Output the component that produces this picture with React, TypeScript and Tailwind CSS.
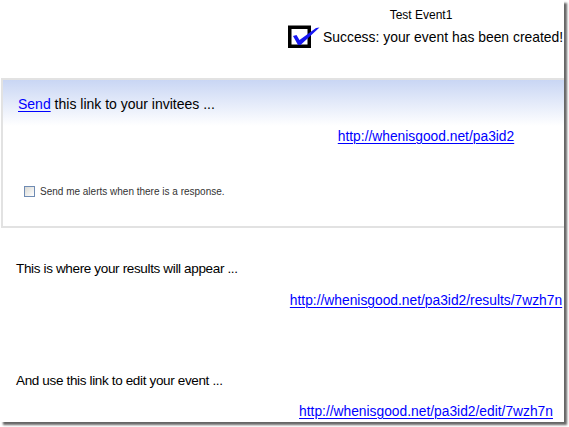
import React from 'react';

function SuccessIcon() {
    return (
        <svg width="32" height="24" viewBox="0 0 32 24" className="shrink-0">
            <rect x="1.75" y="2.25" width="19.5" height="19" fill="#fff" stroke="#000" strokeWidth="3.5" />
            <polygon points="5,11 8.5,10 11.5,15 28,3 31.5,2.5 12.5,20 10,20" fill="#1616f2" />
        </svg>
    );
}

function Link({ children }: { children: React.ReactNode }) {
    return (
        <a href="#" className="text-[#0000ff] underline underline-offset-2 decoration-1">
            {children}
        </a>
    );
}

export default function App() {
    return (
        <div className="w-[569px] h-[427px] bg-white font-['Liberation_Sans',Arial,sans-serif] text-black">
            <div className="w-[564px] h-[422px] bg-white overflow-hidden shadow-[3px_3px_2px_rgba(0,0,0,0.6)]">
                <header className="flex justify-end pt-[7px]">
                    <div className="w-[276px] flex flex-col items-center">
                        <div className="pr-[10px] text-[12px] leading-4">Test Event1</div>
                        <div className="mt-[2px] h-6 w-full flex items-center">
                            <SuccessIcon />
                            <span className="ml-[3px] text-[13.9px] leading-4 whitespace-nowrap">Success: your event has been created!</span>
                        </div>
                    </div>
                </header>

                <section className="mt-[29px] ml-px w-[600px] h-[150px] border-2 border-[#e2e2e2] bg-[linear-gradient(to_bottom,#c9d6f4,#ffffff_46px)] pl-[15px] pt-4">
                    <p className="text-[14px] leading-4">
                        <Link>Send</Link> this link to your invitees ...
                    </p>
                    <div className="mt-[17px] w-[549px] flex">
                        <div className="ml-[270px] w-[276px] text-center text-[13.8px] leading-4">
                            <Link>http://whenisgood.net/pa3id2</Link>
                        </div>
                    </div>
                    <label className="mt-[38px] ml-[6px] h-4 flex items-center gap-[5px] text-[10px] text-[#333]">
                        <span className="w-[11px] h-[11px] border border-[#6f8bb3] bg-[linear-gradient(135deg,#d9d9d4,#ffffff)]" />
                        Send me alerts when there is a response.
                    </label>
                </section>

                <div className="pl-4 leading-4">
                    <p className="mt-[33px] text-[13.5px] tracking-[-0.35px]">This is where your results will appear ...</p>
                    <div className="mt-4 flex justify-end text-[13.8px]">
                        <div className="w-[276px] text-center whitespace-nowrap">
                            <Link>http://whenisgood.net/pa3id2/results/7wzh7n</Link>
                        </div>
                    </div>
                    <p className="mt-16 text-[13.5px] tracking-[-0.35px]">And use this link to edit your event ...</p>
                    <div className="mt-[15px] flex justify-end text-[13.8px]">
                        <div className="w-[276px] text-center whitespace-nowrap">
                            <Link>http://whenisgood.net/pa3id2/edit/7wzh7n</Link>
                        </div>
                    </div>
                </div>
            </div>
        </div>
    );
}
